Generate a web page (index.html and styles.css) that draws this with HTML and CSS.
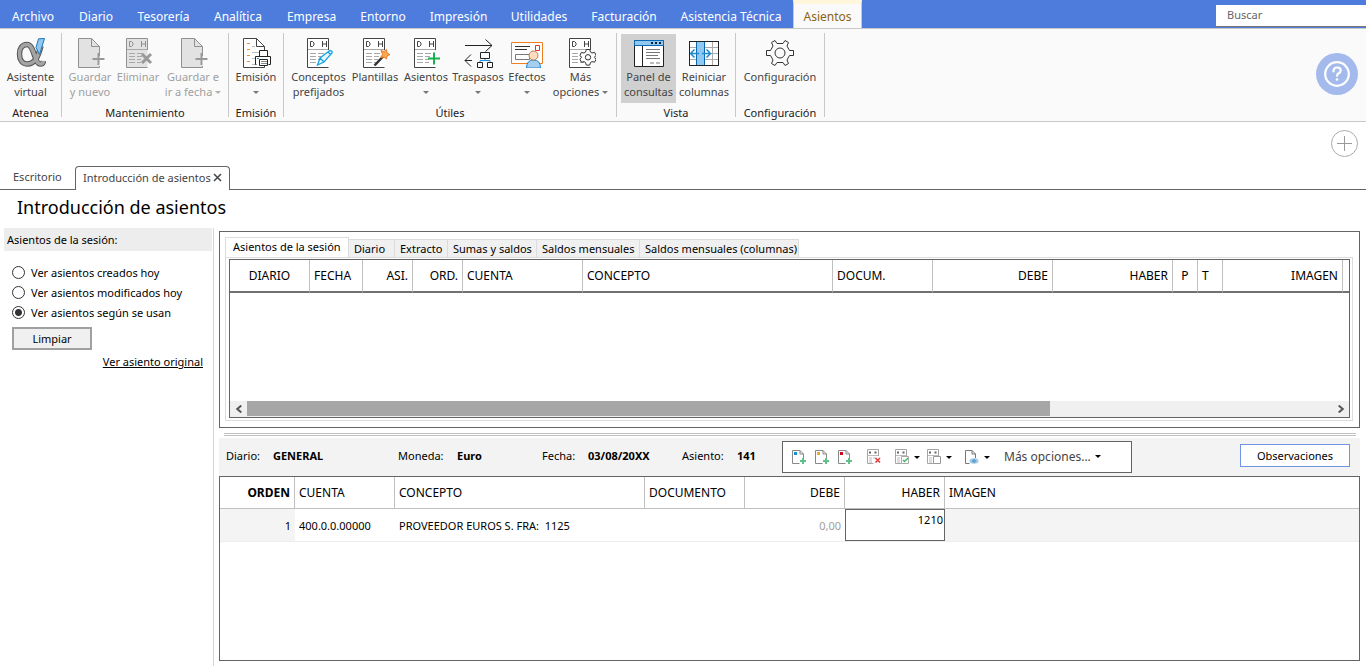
FILE: index.html
```
<!DOCTYPE html>
<html lang="es">
<head>
<meta charset="utf-8">
<title>Introducción de asientos</title>
<link rel="stylesheet" href="styles.css">
</head>
<body>
<svg class="defs" width="0" height="0" aria-hidden="true">
  <symbol id="page" viewBox="0 0 30 30">
    <path class="sheet" d="M1.5.5H15l7 7.500V29.500H1.500z" stroke="none"/>
    <path d="M22.500 18V8.500L14.500.5H1.500v29h21V28M14.500.5v8h8" fill="none" stroke="currentColor"/>
  </symbol>
  <symbol id="dh" viewBox="0 0 30 30">
    <path class="sheet" d="M1.500.5h21v29h-21z" stroke="none"/>
    <path d="M22.500 12V.5h-21v29h21" fill="none" stroke="currentColor"/>
    <path d="M2 11.500h20M4 15.500h6M4 18.500h6M4 21.500h6M4 24.500h6M12 15.500h6M12 18.500h5M12 21.500h4M12 24.500h4" stroke="#a8a8a8" fill="none"/>
    <path d="M4.500 3.500v5h2l1.500-1.500V5L6.500 3.500zM16.500 3v6M20.500 3v6M16.500 6h4" fill="none" stroke="currentColor"/>
  </symbol>
  <symbol id="mini" viewBox="0 0 16 16">
    <path d="M12.500 10V5L9 1.500H1.500v13h7M9 1.500V5h3.500" fill="#fff" stroke="#888"/>
    <path d="M12 9v6M9 12h6" stroke="#5fc088" stroke-width="2"/>
  </symbol>
  <symbol id="minidh" viewBox="0 0 16 16">
    <path d="M12.500 7V.5h-11v14h6" fill="none" stroke="#a5a5a5"/>
    <path d="M3 3.500h2M8.500 3.500h2" stroke="#666" stroke-width="2"/>
    <path d="M2 6.500h10M3 9h3M3 11h3M3 13h3M7 9h3" stroke="#bbb"/>
  </symbol>
  <symbol id="caret" viewBox="0 0 6 3"><path d="M0 0h6L3 3z" fill="currentColor"/></symbol>
</svg>

<header class="menubar">
  <nav class="menu" aria-label="Menú principal">
    <a href="#">Archivo</a><a href="#">Diario</a><a href="#">Tesorería</a><a href="#">Analítica</a><a href="#">Empresa</a><a href="#">Entorno</a><a href="#">Impresión</a><a href="#">Utilidades</a><a href="#">Facturación</a><a href="#">Asistencia Técnica</a><a href="#" class="current" aria-current="page">Asientos</a>
  </nav>
  <input class="search" type="search" placeholder="Buscar" aria-label="Buscar">
</header>

<section class="ribbon" aria-label="Asientos">
  <div class="group g-atenea">
    <div class="tools">
      <button>
        <svg viewBox="0 0 30 30"><path d="M25 8C22 19 19 26 11 26 6 26 3.500 21.500 3.500 16S6 6.500 11 6.500C18.500 6.500 18 26 24.500 26c2 0 2.800-1.500 3-3" fill="none" stroke="#555" stroke-width="5.500"/><path d="M25 8C22 19 19 26 11 26 6 26 3.500 21.500 3.500 16S6 6.500 11 6.500C18.500 6.500 18 26 24.500 26c2 0 2.800-1.500 3-3" fill="none" stroke="#a4a4a4" stroke-width="3.500"/><path d="M22.500.8l6-.3-5 16-3.500-7z" fill="#8fc8f0" stroke="#1e78b8"/></svg>
        <span>Asistente<br>virtual</span></button>
    </div>
    <h2>Atenea</h2>
  </div>
  <div class="group g-mant">
    <div class="tools">
      <button disabled><svg viewBox="-2 0 30 30"><use href="#page" width="30" height="30"/><path d="M21.500 15v12M15.500 21h12" stroke="#999" stroke-width="2"/></svg><span>Guardar<br>y nuevo</span></button>
      <button disabled><svg viewBox="-2 0 30 30"><use href="#dh" width="30" height="30"/><path d="M17 16l9 9M26 16l-9 9" stroke="#999" stroke-width="3"/></svg><span>Eliminar</span></button>
      <button disabled><svg viewBox="-2 0 30 30"><use href="#page" width="30" height="30"/><path d="M21.500 15v12M15.500 21h12" stroke="#999" stroke-width="2"/></svg><span>Guardar e<br>ir a fecha <svg class="caret"><use href="#caret"/></svg></span></button>
    </div>
    <h2>Mantenimiento</h2>
  </div>
  <div class="group g-emision">
    <div class="tools">
      <button><svg viewBox="-1 0 30 30"><use href="#page" width="30" height="30"/><path d="M5 5.500h3M5 11.500h3M5 17.500h3M5 23.500h3" stroke="#f09020"/><path d="M10 8.500h3M10 14.500h8M10 20.500h3M10 26.500h4" stroke="#bbb"/><path d="M17.500 18v-5.500h8V18M14.500 26.500h-1v-8h15v8h-2M17.500 21.500h8v6h-8z" fill="#fff" stroke="#222"/><path d="M19 23.500h6M19 25.500h6" stroke="#888"/><path d="M15 20.500h2" stroke="#2090d8"/></svg><span>Emisión<br><svg class="caret"><use href="#caret"/></svg></span></button>
    </div>
    <h2>Emisión</h2>
  </div>
  <div class="group g-utiles">
    <div class="tools">
      <button><svg viewBox="-2 0 30 30"><use href="#dh" width="30" height="30"/><path d="M11.500 27l2.500-7 9-7q4-1 3 2l-8 9z M14 20l4 4M22 14l3 3" fill="#e8f7ff" stroke="#1ba1e2" stroke-width="1.300"/></svg><span>Conceptos<br>prefijados</span></button>
      <button><svg viewBox="-2 0 30 30"><use href="#dh" width="30" height="30"/><path d="M12.500 27.500l9-9.500" stroke="#333" stroke-width="2.500"/><path d="M19 12.500l3 1 2.500-2 .5 3.500 3 1.500-3 1.500-.5 3-2.500-2-3.500.5 2-3z" fill="#f6a850" stroke="#ee7a28"/></svg><span>Plantillas</span></button>
      <button><svg viewBox="-2 0 30 30"><use href="#dh" width="30" height="30"/><path d="M21 14.500v12M15 20.500h12" stroke="#18b050" stroke-width="2"/></svg><span>Asientos<br><svg class="caret"><use href="#caret"/></svg></span></button>
      <button><svg viewBox="-1 0 30 30"><path d="M1 7.500h27M21.500 1.500l6.500 6-6.500 6M8 22.500H1M7 16.500l-6 6 6 6M16.500 14.500h9v6h-9zM13.500 24.500h5v5h-5zM23.500 24.500h5v5h-5z" fill="none" stroke="#222"/><path d="M16 24v-1.500h10V24M21 21v1.500" fill="none" stroke="#2090d8"/></svg><span>Traspasos<br><svg class="caret"><use href="#caret"/></svg></span></button>
      <button><svg class="wide" viewBox="0 0 32 30"><path d="M.5 4.500h31v21H.5z" fill="#fff" stroke="#ee8022"/><path d="M4 8.500h15M4 11.500h12" stroke="#333"/><path d="M4.500 16.500h14v5h-14z" fill="none" stroke="#777"/><path d="M24.500 7.500h4v5h-4z" fill="none" stroke="#e03030"/><path d="M15.500 30q0-8 7-8t7 8z" fill="#a4cfef" stroke="#1e88d0"/><circle cx="22.500" cy="17.500" r="4.500" fill="#fddcc0" stroke="#b88050"/></svg><span>Efectos<br><svg class="caret"><use href="#caret"/></svg></span></button>
      <button><svg viewBox="-2 0 30 30"><use href="#dh" width="30" height="30"/><path d="M18.300 11.500h3.400l.8 2.600 1.500.9 2.600-.6 1.400 2.900-1.500 2 1.500 2-1.400 2.900-2.600-.6-1.500.9-.8 2.600h-3.400l-.8-2.600-1.500-.9-2.600.6-1.400-2.900 1.500-2-1.500-2 1.400-2.900 2.600.6 1.500-.9z" fill="#fff" stroke="#333"/><circle cx="20" cy="19.300" r="2.700" fill="none" stroke="#333"/></svg><span>Más<br>opciones <svg class="caret"><use href="#caret"/></svg></span></button>
    </div>
    <h2>Útiles</h2>
  </div>
  <div class="group g-vista">
    <div class="tools">
      <button class="pressed" aria-pressed="true"><svg viewBox="0 0 30 30"><path d="M.5 2.500h29v26H.5z" fill="#fff" stroke="#222"/><path d="M.5 2.500h29v5H.5z" fill="#8fc8f0" stroke="#0c68b0"/><path d="M17 5h2M21 5h2M25 5h2" stroke="#123" stroke-width="2"/><path d="M8.500 8v20" stroke="#222"/><path d="M12 11.500h14M12 14.500h14M12 17.500h12M12 20.500h14M16 25h4M22 25h4" stroke="#777"/></svg><span>Panel de<br>consultas</span></button>
      <button><svg viewBox="0 0 30 30"><path d="M.5 3.500h29v24H.5z" fill="#fff" stroke="#222"/><path d="M0 9.500h30M0 15.500h30M0 21.500h30M23.500 3v25" stroke="#aaa"/><path d="M7.500 3.500h8v24h-8z" fill="#8fc8f0" stroke="#0c68b0"/><path d="M10 15.500H2M5.500 11.500l-4 4 4 4M13 15.500h8M17.500 11.500l4 4-4 4" fill="none" stroke="#1e88d0" stroke-width="1.500"/><path d="M.5 3.500h29v24H.5z" fill="none" stroke="#222"/></svg><span>Reiniciar<br>columnas</span></button>
    </div>
    <h2>Vista</h2>
  </div>
  <div class="group g-conf">
    <div class="tools">
      <button><svg viewBox="0 0 30 30"><path d="M12 5.500h6l2-3 3.500 2-1.500 3.500 2.500 4.500h4v5h-4L22 22l1.500 3.500-3.500 2-2-3h-6l-2 3-3.500-2L8 22l-2.500-4.500h-4v-5h4L8 8 6.500 4.500l3.500-2z" fill="none" stroke="#333" stroke-linejoin="round"/><circle cx="15" cy="15" r="5" fill="none" stroke="#333"/></svg><span>Configuración</span></button>
    </div>
    <h2>Configuración</h2>
  </div>
  <button class="help" aria-label="Ayuda"><svg viewBox="0 0 42 42"><circle cx="21" cy="21" r="21" fill="#a5baec"/><circle cx="21" cy="21" r="11.800" fill="none" stroke="#fff" stroke-width="2.200"/><path d="M17.500 18.500q0-4 3.700-4 3.500 0 3.500 3 0 1.600-2 2.700-1.700 1-1.700 2.600" fill="none" stroke="#fff" stroke-width="2.200" stroke-linecap="round"/><circle cx="21" cy="26.500" r="1.300" fill="#fff"/></svg></button>
</section>

<div class="newtab"><button aria-label="Nueva pestaña"><svg viewBox="0 0 27 27"><circle cx="13.500" cy="13.500" r="13" fill="#fff" stroke="#aaa"/><path d="M13.500 6v15M6 13.500h15" stroke="#999"/></svg></button></div>

<nav class="doctabs" aria-label="Documentos">
  <a href="#">Escritorio</a>
  <a href="#" class="current" aria-current="page">Introducción de asientos <svg viewBox="0 0 9 9"><path d="M1 1l7 7M8 1L1 8" stroke="#444" stroke-width="1.500"/></svg></a>
</nav>

<h1>Introducción de asientos</h1>

<div class="workspace">
  <aside class="side">
    <h2>Asientos de la sesión:</h2>
    <form>
      <label><input type="radio" name="ver"> Ver asientos creados hoy</label>
      <label><input type="radio" name="ver"> Ver asientos modificados hoy</label>
      <label><input type="radio" name="ver" checked> Ver asientos según se usan</label>
      <button type="button">Limpiar</button>
      <a href="#">Ver asiento original</a>
    </form>
  </aside>

  <main>
    <section class="queries">
      <div class="qtabs" role="tablist">
        <button role="tab" aria-selected="true">Asientos de la sesión</button><button role="tab">Diario</button><button role="tab">Extracto</button><button role="tab">Sumas y saldos</button><button role="tab">Saldos mensuales</button><button role="tab">Saldos mensuales (columnas)</button>
      </div>
      <div class="qpage">
        <div class="qgrid">
          <table class="session">
            <colgroup><col class="w80"><col class="w53"><col class="w50"><col class="w50"><col class="w120"><col class="w250"><col class="w100"><col class="w120"><col class="w120"><col class="w25"><col class="w25"><col class="w120"><col></colgroup>
            <thead><tr><th class="center">DIARIO</th><th>FECHA</th><th class="num">ASI.</th><th class="num">ORD.</th><th>CUENTA</th><th>CONCEPTO</th><th>DOCUM.</th><th class="num">DEBE</th><th class="num">HABER</th><th class="center">P</th><th>T</th><th class="num">IMAGEN</th><th></th></tr></thead>
          </table>
          <div class="scroll">
            <button aria-label="Desplazar a la izquierda"><svg viewBox="0 0 7 7"><path d="M5.500.5l-3.500 3 3.500 3" fill="none" stroke="#555" stroke-width="1.800"/></svg></button>
            <div class="track"><div class="thumb"></div></div>
            <button aria-label="Desplazar a la derecha"><svg viewBox="0 0 7 7"><path d="M1.500.5l3.500 3-3.500 3" fill="none" stroke="#555" stroke-width="1.800"/></svg></button>
          </div>
        </div>
      </div>
    </section>
    <div class="splitter"></div>
    <section class="entry">
      <div class="bar">
        <dl>
          <div class="f-diario"><dt>Diario:</dt><dd>GENERAL</dd></div>
          <div class="f-moneda"><dt>Moneda:</dt><dd>Euro</dd></div>
          <div class="f-fecha"><dt>Fecha:</dt><dd>03/08/20XX</dd></div>
          <div class="f-asiento"><dt>Asiento:</dt><dd>141</dd></div>
        </dl>
        <div class="toolbox">
          <button aria-label="Nuevo apunte"><svg viewBox="0 0 16 16"><use href="#mini"/><path d="M3 3h3v3H3z" fill="#0a96dc"/></svg></button>
          <button aria-label="Insertar apunte"><svg viewBox="0 0 16 16"><use href="#mini"/><path d="M3 3h3v3H3z" fill="#f0a830"/></svg></button>
          <button aria-label="Duplicar apunte"><svg viewBox="0 0 16 16"><use href="#mini"/><path d="M3 3h3v3H3z" fill="#d8001c"/></svg></button>
          <button class="t-del" aria-label="Eliminar apunte"><svg viewBox="0 0 16 16"><use href="#minidh"/><path d="M9.500 9l4.500 4.500M14 9l-4.500 4.500" stroke="#e83a3a" stroke-width="1.600"/></svg></button>
          <button class="t-check" aria-label="Validar"><svg viewBox="0 0 16 16"><use href="#minidh"/><path d="M7.500 7.500h7v7h-7z" fill="#fff" stroke="#aaa"/><path d="M9 11l1.500 1.500L14 9" fill="none" stroke="#3cb868" stroke-width="1.400"/></svg><svg class="caret"><use href="#caret"/></svg></button>
          <button class="t-copy" aria-label="Copiar"><svg viewBox="0 0 16 16"><use href="#minidh"/><path d="M7.500 7.500h7v7h-7z" fill="#fff" stroke="#999"/></svg><svg class="caret"><use href="#caret"/></svg></button>
          <button class="t-view" aria-label="Ver documento"><svg viewBox="0 0 16 16"><path d="M11.500 9V5L8 1.500H1.500v13h4M8 1.500V5h3.500" fill="none" stroke="#777"/><ellipse cx="10" cy="12" rx="4.500" ry="2.800" fill="#9cc8e8"/><circle cx="10" cy="12" r="1.800" fill="#5a9cd0"/></svg><svg class="caret"><use href="#caret"/></svg></button>
          <button class="t-more">Más opciones... <svg class="caret"><use href="#caret"/></svg></button>
        </div>
        <button class="notes">Observaciones</button>
      </div>
      <div class="lines">
        <table>
          <colgroup><col class="w75"><col class="w100"><col class="w250"><col class="w100"><col class="w100"><col class="w100"><col></colgroup>
          <thead><tr><th class="num strong">ORDEN</th><th>CUENTA</th><th>CONCEPTO</th><th>DOCUMENTO</th><th class="num">DEBE</th><th class="num">HABER</th><th>IMAGEN</th></tr></thead>
          <tbody><tr><td class="num shade">1</td><td>400.0.0.00000</td><td>PROVEEDOR EUROS S. FRA: &nbsp;1125</td><td></td><td class="num zero">0,00</td><td class="edit"><input type="text" value="1210" aria-label="Haber"></td><td class="shade"></td></tr></tbody>
        </table>
      </div>
    </section>
  </main>
</div>
</body>
</html>
```

FILE: styles.css
```
* { box-sizing: border-box; }
body { margin: 0; min-height: 100vh; display: flex; flex-direction: column; background: #fff; color: #000; font: 11px/15px "Noto Sans", "Open Sans", sans-serif; }
button, input { font: inherit; color: inherit; }
button { border: 0; background: none; padding: 0; margin: 0; }
h1, h2, dl, dd { margin: 0; font-weight: 400; font-size: inherit; }
a { color: inherit; text-decoration: none; }
svg { display: block; }
.defs { position: absolute; }
.caret { display: inline-block; width: 6px; height: 3px; vertical-align: middle; }

.menubar { display: flex; justify-content: space-between; align-items: flex-start; height: 28px; background: #4e7cdd; flex: none; }
.menu { display: grid; grid-template-columns: 66px 60px 75px 74px 73px 70px 81px 80px 90px 124px 69px; height: 28px; color: #fff; font-size: 12px; text-align: center; line-height: 34px; }
.menu .current { background: #fafafa; color: #8a6410; border: 1px solid #c8c8c8; border-width: 0 1px; border-top: 4px solid #fff6dc; line-height: 26px; }
.search { width: 150px; height: 22px; margin-top: 5px; border: 0; border-bottom: 1px solid #777; border-radius: 0; background: #fff; padding: 0 11px 3px; outline: 0; appearance: none; }
.search::placeholder { color: #666; opacity: 1; }

.ribbon { display: flex; height: 94px; background: #fafafa; border-top: 1px solid #c8c8c8; border-bottom: 1px solid #c8c8c8; color: #444; flex: none; }
.group { display: flex; flex-direction: column; justify-content: space-between; margin: 4px 0; padding: 1px 4px 0; border-right: 1px solid #c8c8c8; }
.group h2 { text-align: center; color: #222; line-height: 8px; }
.tools { display: grid; }
.tools button { height: 69px; padding-top: 4px; display: flex; flex-direction: column; align-items: center; white-space: nowrap; line-height: 15px; }
.tools button > svg { width: 30px; height: 30px; margin-bottom: 1px; flex: none; }
.tools button > svg.wide { width: 32px; }
.tools button:disabled { color: #a0a0a0; --sheet: #e2e2e2; }
.tools .caret { color: #777; margin-bottom: 2px; }
.tools button:disabled > svg { color: #909090; }
.tools button:disabled .caret { color: #b0b0b0; }
.sheet { fill: var(--sheet, #fff); }
.g-atenea { width: 62px; padding: 1px 0 0; }
.g-mant { width: 167px; }
.g-mant .tools { grid-template-columns: 48px 48px 62px; }
.g-emision { width: 55px; padding: 1px 0 0; }
.g-utiles { width: 333px; }
.g-utiles .tools { grid-template-columns: 61px 52px 50px 54px 44px 63px; }
.g-vista { width: 119px; }
.g-vista .tools { grid-template-columns: 55px 56px; }
.g-conf { width: 89px; padding: 1px 0 0; }
.pressed { background: #d0d0d0; }
.help { margin: 24px 8px 0 auto; width: 42px; height: 42px; }

.newtab { height: 44px; padding: 8px 8px 0 0; display: flex; justify-content: flex-end; flex: none; }
.newtab button { width: 27px; height: 27px; }
.doctabs { display: flex; height: 24px; border-bottom: 1px solid #646464; line-height: 21px; color: #444; flex: none; }
.doctabs a { width: 75px; padding-left: 13px; }
.doctabs .current { width: 155px; padding: 0 0 3px 7px; display: flex; align-items: center; gap: 2px; border: 1px solid #646464; border-bottom: 0; border-radius: 4px 4px 0 0; background: #fff; margin-bottom: -1px; }
.doctabs svg { width: 9px; height: 9px; }
h1 { padding: 3px 17px 7px; font-size: 18px; line-height: 28px; }

.workspace { display: flex; flex: 1; }
.side { width: 214px; padding: 0 1px 0 4px; border-right: 1px solid #d5d5d5; flex: none; }
.side h2 { background: #ededed; padding: 0 3px; line-height: 23px; }
.side form { display: flex; flex-direction: column; align-items: flex-start; padding: 11px 9px 0 8px; }
.side label { display: flex; align-items: center; gap: 6px; height: 20px; }
.side input { appearance: none; width: 13px; height: 13px; margin: 0; border: 1px solid #333; border-radius: 50%; background: #fff; }
.side input:checked { background: radial-gradient(circle, #333 3px, #fff 4px); }
.side button { width: 80px; height: 23px; margin: 5px 0 4px; background: #f0f0f0; border: 2px solid #a0a0a0; }
.side a { align-self: flex-end; text-decoration: underline; }

main { flex: 1; min-width: 0; display: flex; flex-direction: column; padding: 3px 6px 5px 5px; }
.queries { border: 1px solid #646464; padding: 5px 6px 6px 5px; }
.qtabs { display: grid; grid-template-columns: 124px 46px 53px 89px 103px 159px; align-items: end; height: 20px; }
.qtabs button { height: 18px; padding: 0 0 0 5px; background: #f0f0f0; border: 1px solid #dcdcdc; border-width: 1px 1px 0 0; white-space: nowrap; text-align: left; }
.qtabs button[aria-selected] { height: 20px; background: #fff; border-left-width: 1px; padding: 0 7px 2px; }
.qpage { border: 1px solid #dcdcdc; padding: 1px 2px 2px 3px; }
.qgrid { height: 159px; border: 1px solid #646464; display: flex; flex-direction: column; justify-content: space-between; }
table { width: 100%; table-layout: fixed; border-collapse: separate; border-spacing: 0; font-size: 12px; }
th { height: 32px; padding: 0 4px; text-align: left; font-weight: 400; border-right: 1px solid #c0c0c0; border-bottom: 1px solid #c0c0c0; }
th:last-child { border-right: 0; }
td { padding: 0 4px; height: 33px; font-size: 11px; border-bottom: 1px solid #ededed; }
.session th { height: 33px; border-bottom: 2px solid #707070; }
.center { text-align: center; }
.num { text-align: right; }
.strong { font-weight: 700; }
.shade { background: #f4f4f4; }
.zero { color: #a0a0a0; }
.w25 { width: 25px; } .w50 { width: 50px; } .w53 { width: 53px; } .w75 { width: 75px; } .w80 { width: 80px; }
.w100 { width: 100px; } .w120 { width: 120px; } .w250 { width: 250px; }
.scroll { display: flex; height: 16px; background: #f0f0f0; }
.scroll button { width: 17px; display: flex; align-items: center; justify-content: center; }
.scroll svg { width: 8px; height: 8px; }
.track { flex: 1; }
.thumb { width: 74%; height: 15px; background: #a6a6a6; }
.splitter { height: 3px; margin: 5px 4px 2px 5px; border: 1px solid #c0c0c0; border-width: 1px 0; }

.entry { flex: 1; display: flex; flex-direction: column; }
.bar { display: flex; align-items: center; height: 38px; padding-right: 10px; background: #f3f3f3; }
.bar dl, .bar dl div { display: flex; }
.bar dl { padding: 0 0 4px 7px; }
.bar dd { font-weight: 700; }
.f-diario { width: 172px; } .f-diario dt { width: 47px; }
.f-moneda { width: 144px; } .f-moneda dt { width: 59px; }
.f-fecha { width: 140px; } .f-fecha dt { width: 46px; }
.f-asiento { width: 100px; } .f-asiento dt { width: 55px; }
.toolbox { display: flex; align-items: center; width: 350px; height: 32px; padding-left: 8px; border: 1px solid #646464; background: #fff; }
.toolbox button { display: flex; align-items: center; gap: 4px; width: 23px; color: #444; }
.toolbox button > svg:first-child:not(.caret) { width: 16px; height: 16px; }
.toolbox .caret { color: #000; }
.toolbox .t-del { width: 28px; margin-left: 6px; }
.toolbox .t-check { width: 32px; }
.toolbox .t-copy { width: 38px; }
.toolbox .t-view { width: 40px; }
.toolbox .t-more { width: auto; font-size: 12px; height: 20px; padding-bottom: 2px; }
.notes { margin: 0 0 3px auto; width: 110px; height: 23px; border: 1px solid #6e96e4; background: #fff; }
.lines { flex: 1; border: 1px solid #646464; }
.edit { padding: 0; vertical-align: top; }
.edit input { display: block; width: 100%; height: 32px; border: 1px solid #646464; padding: 0 1px 12px; text-align: right; background: #fff; }
```
